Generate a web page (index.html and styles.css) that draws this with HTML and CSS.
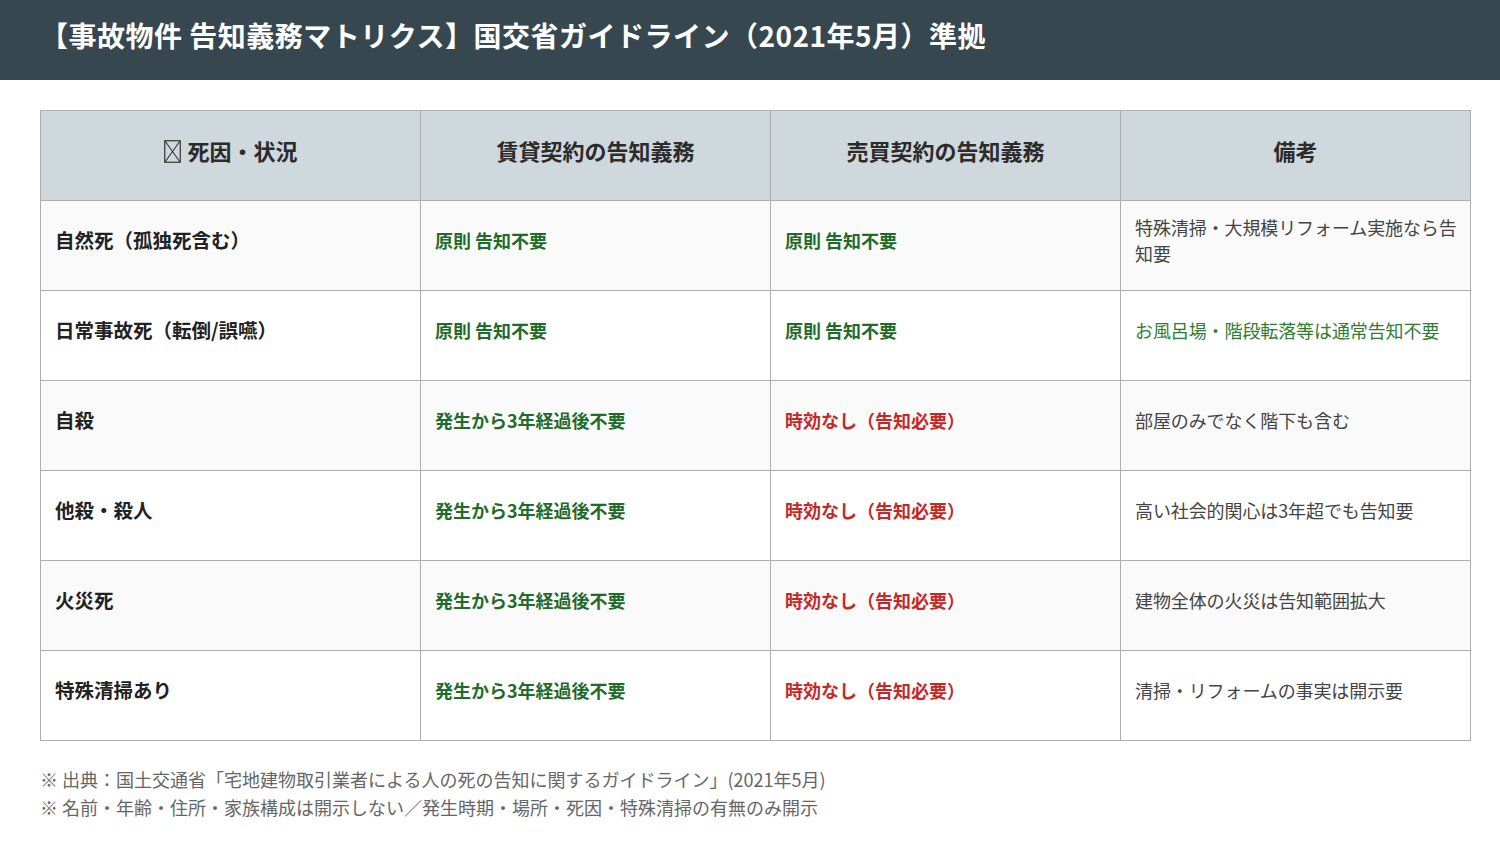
FILE: index.html
```html
<!DOCTYPE html>
<html lang="ja">
<head>
<meta charset="utf-8">
<link rel="stylesheet" href="styles.css">
</head>
<body>
<header class="topbar">
  <h1 class="title">【事故物件 告知義務マトリクス】国交省ガイドライン（2021年5月）準拠</h1>
</header>
<main class="content">
  <table class="matrix">
    <colgroup>
      <col class="c1"><col class="c2"><col class="c3"><col class="c4">
    </colgroup>
    <thead>
      <tr>
        <th><svg class="tofu" width="17" height="23" viewBox="0 0 17 23"><rect x="0.75" y="0.75" width="15.5" height="21.5" fill="none" stroke="#333" stroke-width="1.2"/><path d="M1 1L16 22M16 1L1 22" stroke="#333" stroke-width="1.1" fill="none"/></svg> 死因・状況</th>
        <th>賃貸契約の告知義務</th>
        <th>売買契約の告知義務</th>
        <th>備考</th>
      </tr>
    </thead>
    <tbody>
      <tr>
        <td class="cause">自然死（孤独死含む）</td>
        <td class="ok">原則 告知不要</td>
        <td class="ok">原則 告知不要</td>
        <td class="note">特殊清掃・大規模リフォーム実施なら告知要</td>
      </tr>
      <tr>
        <td class="cause">日常事故死（転倒/誤嚥）</td>
        <td class="ok">原則 告知不要</td>
        <td class="ok">原則 告知不要</td>
        <td class="note green">お風呂場・階段転落等は通常告知不要</td>
      </tr>
      <tr>
        <td class="cause">自殺</td>
        <td class="ok">発生から3年経過後不要</td>
        <td class="ng">時効なし（告知必要）</td>
        <td class="note">部屋のみでなく階下も含む</td>
      </tr>
      <tr>
        <td class="cause">他殺・殺人</td>
        <td class="ok">発生から3年経過後不要</td>
        <td class="ng">時効なし（告知必要）</td>
        <td class="note">高い社会的関心は3年超でも告知要</td>
      </tr>
      <tr>
        <td class="cause">火災死</td>
        <td class="ok">発生から3年経過後不要</td>
        <td class="ng">時効なし（告知必要）</td>
        <td class="note">建物全体の火災は告知範囲拡大</td>
      </tr>
      <tr>
        <td class="cause">特殊清掃あり</td>
        <td class="ok">発生から3年経過後不要</td>
        <td class="ng">時効なし（告知必要）</td>
        <td class="note">清掃・リフォームの事実は開示要</td>
      </tr>
    </tbody>
  </table>
  <div class="notes">
    <p>※ 出典：国土交通省「宅地建物取引業者による人の死の告知に関するガイドライン」(2021年5月)</p>
    <p>※ 名前・年齢・住所・家族構成は開示しない／発生時期・場所・死因・特殊清掃の有無のみ開示</p>
  </div>
</main>
</body>
</html>
```
FILE: styles.css
```css
* { box-sizing: border-box; }
html, body { margin: 0; padding: 0; background: #ffffff; }
body {
  font-family: "Noto Sans CJK JP", "Noto Sans", sans-serif;
  color: #222;
  width: 1500px;
  height: 850px;
  overflow: hidden;
}
.topbar {
  background: #37474f;
  height: 80px;
  display: flex;
  align-items: center;
  padding: 0 0 10px 40px;
}
.title {
  margin: 0;
  color: #ffffff;
  font-size: 28px;
  font-weight: 700;
  letter-spacing: 0.5px;
}
.content {
  padding: 30px 30px 0 40px;
}
.matrix {
  border-collapse: collapse;
  width: 1430px;
  table-layout: fixed;
}
.c1 { width: 380px; }
.c2, .c3, .c4 { width: 350px; }
.matrix th, .matrix td {
  border: 1px solid #aeaeae;
  height: 90px;
  vertical-align: middle;
}
.matrix th {
  background: #cfd8dc;
  color: #2b2b2b;
  font-size: 22px;
  font-weight: 700;
  text-align: center;
  padding: 0 10px 12px;
}
.tofu { vertical-align: -3px; margin-right: 2px; }
.matrix td {
  font-size: 18px;
  line-height: 26px;
  padding: 0 10px 12px 14px;
  text-align: left;
}
.matrix tbody tr:nth-child(odd) td { background: #fafafa; }
.matrix tbody tr:nth-child(even) td { background: #ffffff; }
.matrix td.cause { font-weight: 700; color: #222; font-size: 19.5px; }
.ok { font-weight: 700; color: #1e6b2a; }
.ng { font-weight: 700; color: #c62828; }
.matrix td.note { color: #444; font-weight: 400; padding-right: 8px; letter-spacing: -0.1px; }
.matrix td.note.green { color: #2e7d32; }
.notes {
  margin-top: 24px;
  color: #666;
  font-size: 18px;
  line-height: 28px;
}
.notes p { margin: 0; }
```
